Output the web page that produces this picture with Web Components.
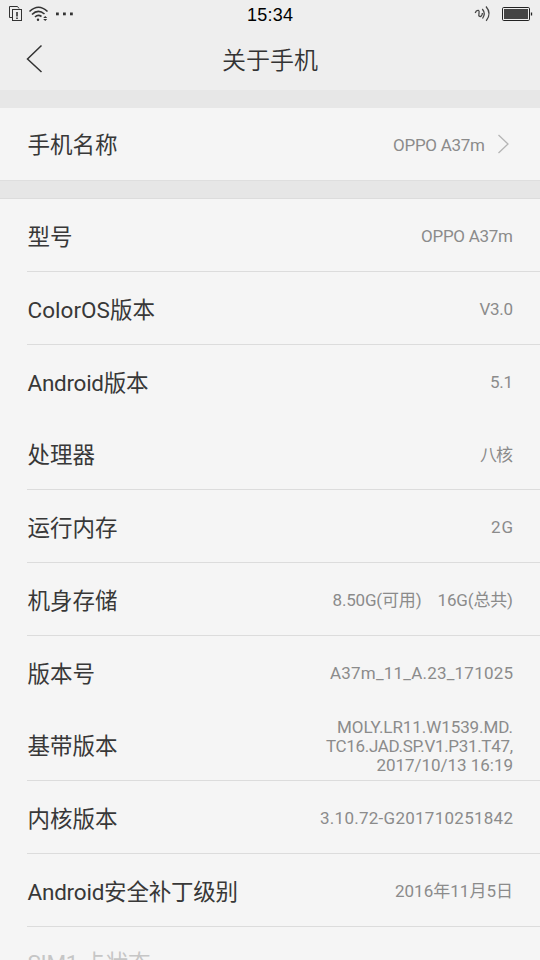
<!DOCTYPE html>
<html lang="zh-CN"><head><meta charset="utf-8"><title>关于手机</title>
<style>html,body{margin:0;height:960px;overflow:hidden;background:#f5f5f5}</style></head>
<body><about-page></about-page>
<script>
// A single line of text whose tracking is adjusted to fill the given advance width.
class FitText extends HTMLElement{
  connectedCallback(){
    const r=this.attachShadow({mode:'open'});
    r.innerHTML='<style>:host{display:block;white-space:pre}span{display:inline-block}</style><span></span>';
    const s=r.querySelector('span');s.textContent=this.getAttribute('text');
    const w=+this.getAttribute('fit');
    if(w){const d=(w-s.getBoundingClientRect().width)/(s.textContent.length-1);
      s.style.letterSpacing=d+'px';s.style.marginRight=-d+'px';}
  }
}
customElements.define('fit-text',FitText);

class StatusBar extends HTMLElement{
  constructor(){super();this.attachShadow({mode:'open'}).innerHTML=`<style>
  :host{display:grid;grid-template-columns:1fr auto 1fr;height:30px;align-items:center;color:#000}
  svg{display:block}.r{justify-self:end}
  fit-text{font:18px/30px "Liberation Sans",sans-serif}</style>
  <svg width="80" height="30" fill="none" stroke="#333">
    <path d="M12.5 17.5h-3V6.5h8l1.5 2"/><rect x="12.5" y="9.5" width="9" height="11"/><path d="M17 12v4.5M17 17.5v1.5" stroke-width="1.6"/>
    <path d="M29.5 11.5Q38.5 3 47.5 11.5" stroke-width="1.6"/><path d="M32 14.5Q38 8.5 44.5 14" stroke-width="1.6"/><path d="M35 17Q38 14 41.5 16.5" stroke-width="1.6"/>
    <g fill="#333" stroke="none"><circle cx="38" cy="19.7" r="1.2"/><path d="M43.2 17.9h4l-2-2zM43.2 18.9h4l-2 2z"/><rect x="56" y="12.5" width="2.8" height="2.8"/><rect x="63" y="12.5" width="2.8" height="2.8"/><rect x="70" y="12.5" width="2.8" height="2.8"/></g>
  </svg>
  <fit-text text="15:34" fit="46"></fit-text>
  <svg class="r" width="80" height="30" fill="none" stroke="#444" stroke-width="1.3">
    <path d="M15.2 13q1-3 3.2-2.6c2.2.7-.8 4.6.9 5.8 1.6.9 3-.8 3.1-3.2M22.3 9q3.7 4.5.2 9.5M26 6.5q6 7 .2 14.3"/>
    <rect x="42.5" y="7.5" width="27" height="13" rx="1.2" stroke="#222" stroke-width="1"/><rect x="44" y="9" width="24" height="10" fill="#444" stroke="none"/><path d="M71.5 12.5v3" stroke="#222"/>
  </svg>`;}
}
customElements.define('status-bar',StatusBar);

class TitleBar extends HTMLElement{
  constructor(){super();this.attachShadow({mode:'open'}).innerHTML=`<style>
  :host{display:grid;grid-template-columns:1fr auto 1fr;height:60px;color:#333;font:24px/57px "Noto Sans CJK SC",sans-serif;font-weight:350}
  svg{display:block}</style>
  <svg width="60" height="60" fill="none" stroke="#333" stroke-width="1.5"><path d="M41.5 15.5L27.5 29l14 13"/></svg>
  <slot></slot><span></span>`;}
}
customElements.define('title-bar',TitleBar);

class InfoRow extends HTMLElement{
  constructor(){super();this.attachShadow({mode:'open'}).innerHTML=`<style>
  :host{display:flex;box-sizing:border-box;margin-left:27px;padding-right:27px;align-items:center;justify-content:space-between;border-bottom:1px solid #dcdcdc;flex:none}
  :host([plain]){border-color:transparent}
  :host([dim]) .label{color:#c6c6c6;padding-top:0}
  .label{font:22.5px/32px Roboto,"Noto Sans CJK SC",sans-serif;color:#383838;white-space:pre;padding:3px 0 0 .5px}
  .side{display:flex;align-items:center;gap:12px}
  .value{display:flex;flex-direction:column;align-items:flex-end;font:17px/19px Roboto,"Noto Sans CJK SC",sans-serif;color:#8b8b8b;padding-top:3px}
  svg{display:block;margin-right:3px}</style>
  <div class="label"><slot name="label"></slot></div>
  <div class="side"><div class="value"><slot></slot></div></div>`;}
  connectedCallback(){
    this.style.height=this.getAttribute('h')+'px';
    if(this.hasAttribute('arrow'))this.shadowRoot.querySelector('.side').insertAdjacentHTML('beforeend','<svg width="13" height="22" fill="none" stroke="#b5b5b5" stroke-width="1.3"><path d="M1.5 2L11 11l-9.5 9"/></svg>');
  }
}
customElements.define('info-row',InfoRow);

class AboutPage extends HTMLElement{
  constructor(){
    super();
    const rows=[
      ['型号',0,[['OPPO A37m',92]],73],
      ['ColorOS版本',127.5,[['V3.0',33.5]],73],
      ['Android版本',121,[['5.1',23]],73,'plain'],
      ['处理器',0,[['八核',33]],72],
      ['运行内存',0,[['2G',22]],73],
      ['机身存储',0,[['8.50G(可用)    16G(总共)',180.5]],73],
      ['版本号',0,[['A37m_11_A.23_171025',183]],73,'plain'],
      ['基带版本',0,[['MOLY.LR11.W1539.MD.',176],['TC16.JAD.SP.V1.P31.T47,',187],['2017/10/13 16:19',136.5]],72],
      ['内核版本',0,[['3.10.72-G201710251842',193]],73],
      ['Android安全补丁级别',210.5,[['2016年11月5日',118]],73],
      ['SIM1 卡状态',123,[],73,'dim']];
    const row=([l,w,v,h,a=''])=>`<info-row h="${h}" ${a}><fit-text slot="label" text="${l}" fit="${w}"></fit-text>${v.map(([t,f])=>`<fit-text text="${t}" fit="${f}"></fit-text>`).join('')}</info-row>`;
    this.attachShadow({mode:'open'}).innerHTML=`<style>
    :host{display:flex;flex-direction:column;width:540px;height:960px;overflow:hidden;background:#f5f5f5}
    header{background:#eee}
    .gap{flex:none;height:18px;background:#e7e7e7}
    .gap.mid{height:19px;box-sizing:border-box;border-top:1px solid #dedede;border-bottom:1px solid #dcdcdc;background:#e6e6e6}</style>
    <header><status-bar></status-bar><title-bar>关于手机</title-bar></header>
    <div class="gap"></div>
    ${row(['手机名称',0,[['OPPO A37m',92]],72,'plain arrow'])}
    <div class="gap mid"></div>
    ${rows.map(row).join('')}`;
  }
}
customElements.define('about-page',AboutPage);
</script></body></html>
